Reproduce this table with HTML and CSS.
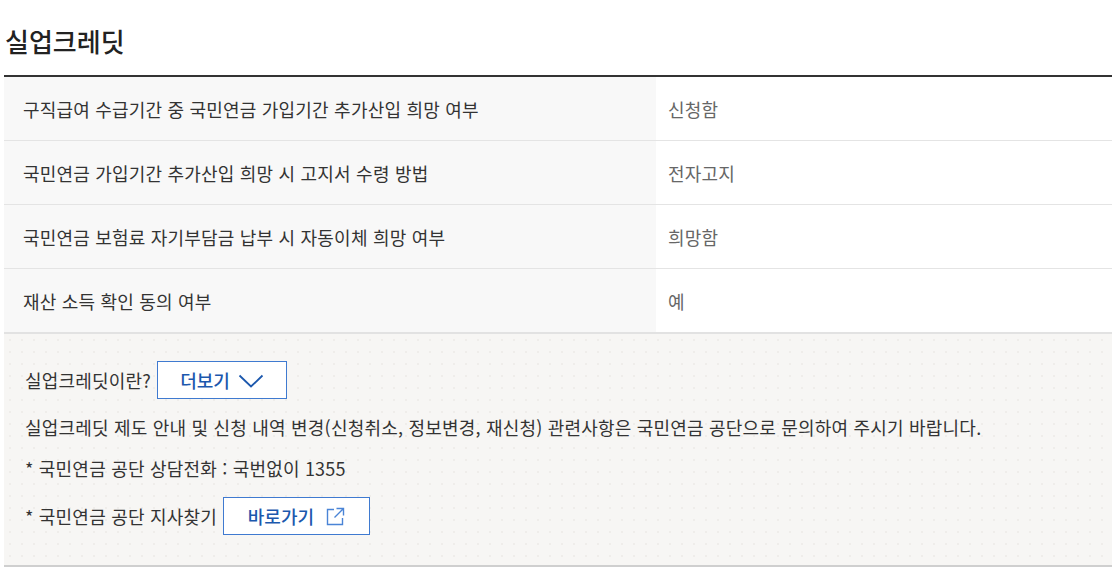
FILE: index.html
```html
<!DOCTYPE html>
<html lang="ko">
<head>
<meta charset="utf-8">
<link rel="stylesheet" href="styles.css">
</head>
<body>
<div class="page">
  <h2 class="title">실업크레딧</h2>
  <div class="table">
    <div class="row"><div class="label">구직급여 수급기간 중 국민연금 가입기간 추가산입 희망 여부</div><div class="value">신청함</div></div>
    <div class="row"><div class="label">국민연금 가입기간 추가산입 희망 시 고지서 수령 방법</div><div class="value">전자고지</div></div>
    <div class="row"><div class="label">국민연금 보험료 자기부담금 납부 시 자동이체 희망 여부</div><div class="value">희망함</div></div>
    <div class="row last"><div class="label">재산 소득 확인 동의 여부</div><div class="value">예</div></div>
  </div>
  <div class="info">
    <div class="line btn-line">
      <span>실업크레딧이란?</span>
      <button class="btn more">더보기
        <svg width="26" height="14" viewBox="0 0 26 14"><path d="M1.5 1.5 L13 12.5 L24.5 1.5" fill="none" stroke="currentColor" stroke-width="1.8"/></svg>
      </button>
    </div>
    <p class="line">실업크레딧 제도 안내 및 신청 내역 변경(신청취소, 정보변경, 재신청) 관련사항은 국민연금 공단으로 문의하여 주시기 바랍니다.</p>
    <p class="line">* 국민연금 공단 상담전화 : 국번없이 1355</p>
    <div class="line btn-line">
      <span>* 국민연금 공단 지사찾기</span>
      <button class="btn go">바로가기
        <svg width="19" height="19" viewBox="0 0 19 19"><path d="M8 2.5 H1.5 V17.5 H16.5 V11" fill="none" stroke="currentColor" stroke-width="1.4"/><path d="M10.5 1.5 H17.5 V8.5 M17.5 1.5 L8.5 10.5" fill="none" stroke="currentColor" stroke-width="1.4"/></svg>
      </button>
    </div>
  </div>
</div>
</body>
</html>
```

FILE: styles.css
```css
* { box-sizing: border-box; }
html, body { margin: 0; padding: 0; background: #fff; }
body {
  font-family: "Noto Sans CJK KR", "Noto Sans", sans-serif;
  color: #333;
}
.page { padding: 0 0 0 4px; }
.title {
  margin: 0;
  height: 75px;
  padding: 22px 0 0 1px;
  font-size: 26px;
  line-height: 38px;
  font-weight: 500;
  color: #222;
}
.table { border-top: 2px solid #333; }
.row {
  display: flex;
  height: 64px;
  border-bottom: 1px solid #e4e4e4;
}
.row.last { height: 65px; border-bottom: 2px solid #e2e2e2; }
.label {
  width: 652px;
  background: #f8f8f8;
  display: flex;
  align-items: center;
  padding-left: 19px;
  font-size: 18px;
  letter-spacing: 0.2px;
  color: #333;
}
.value {
  flex: 1;
  display: flex;
  align-items: center;
  padding-left: 12px;
  font-size: 18px;
  letter-spacing: 0.2px;
  color: #666;
}
.info {
  background-color: #f7f6f4;
  background-image: radial-gradient(circle, #efedea 1px, transparent 1.3px);
  background-size: 12px 12px;
  border-bottom: 2px solid #cfcfcf;
  padding: 27px 0 31px 21px;
  display: flex;
  flex-direction: column;
  gap: 16px;
  height: 233px;
}
.line {
  margin: 0;
  font-size: 18px;
  line-height: 25px;
  letter-spacing: 0.2px;
  color: #333;
}
.btn-line {
  display: flex;
  align-items: center;
  gap: 6px;
}
.btn {
  display: inline-flex;
  align-items: center;
  justify-content: center;
  height: 38px;
  background: #fff;
  border: 1px solid #3f7ad0;
  color: #1c58ad;
  font-family: inherit;
  font-size: 18px;
  font-weight: 500;
  padding: 0;
}
.btn.more { width: 130px; gap: 8px; }
.btn.more svg { margin-top: 2px; }
.btn.go { width: 147px; gap: 12px; }
.btn.go svg { color: #4a84d6; }
```
